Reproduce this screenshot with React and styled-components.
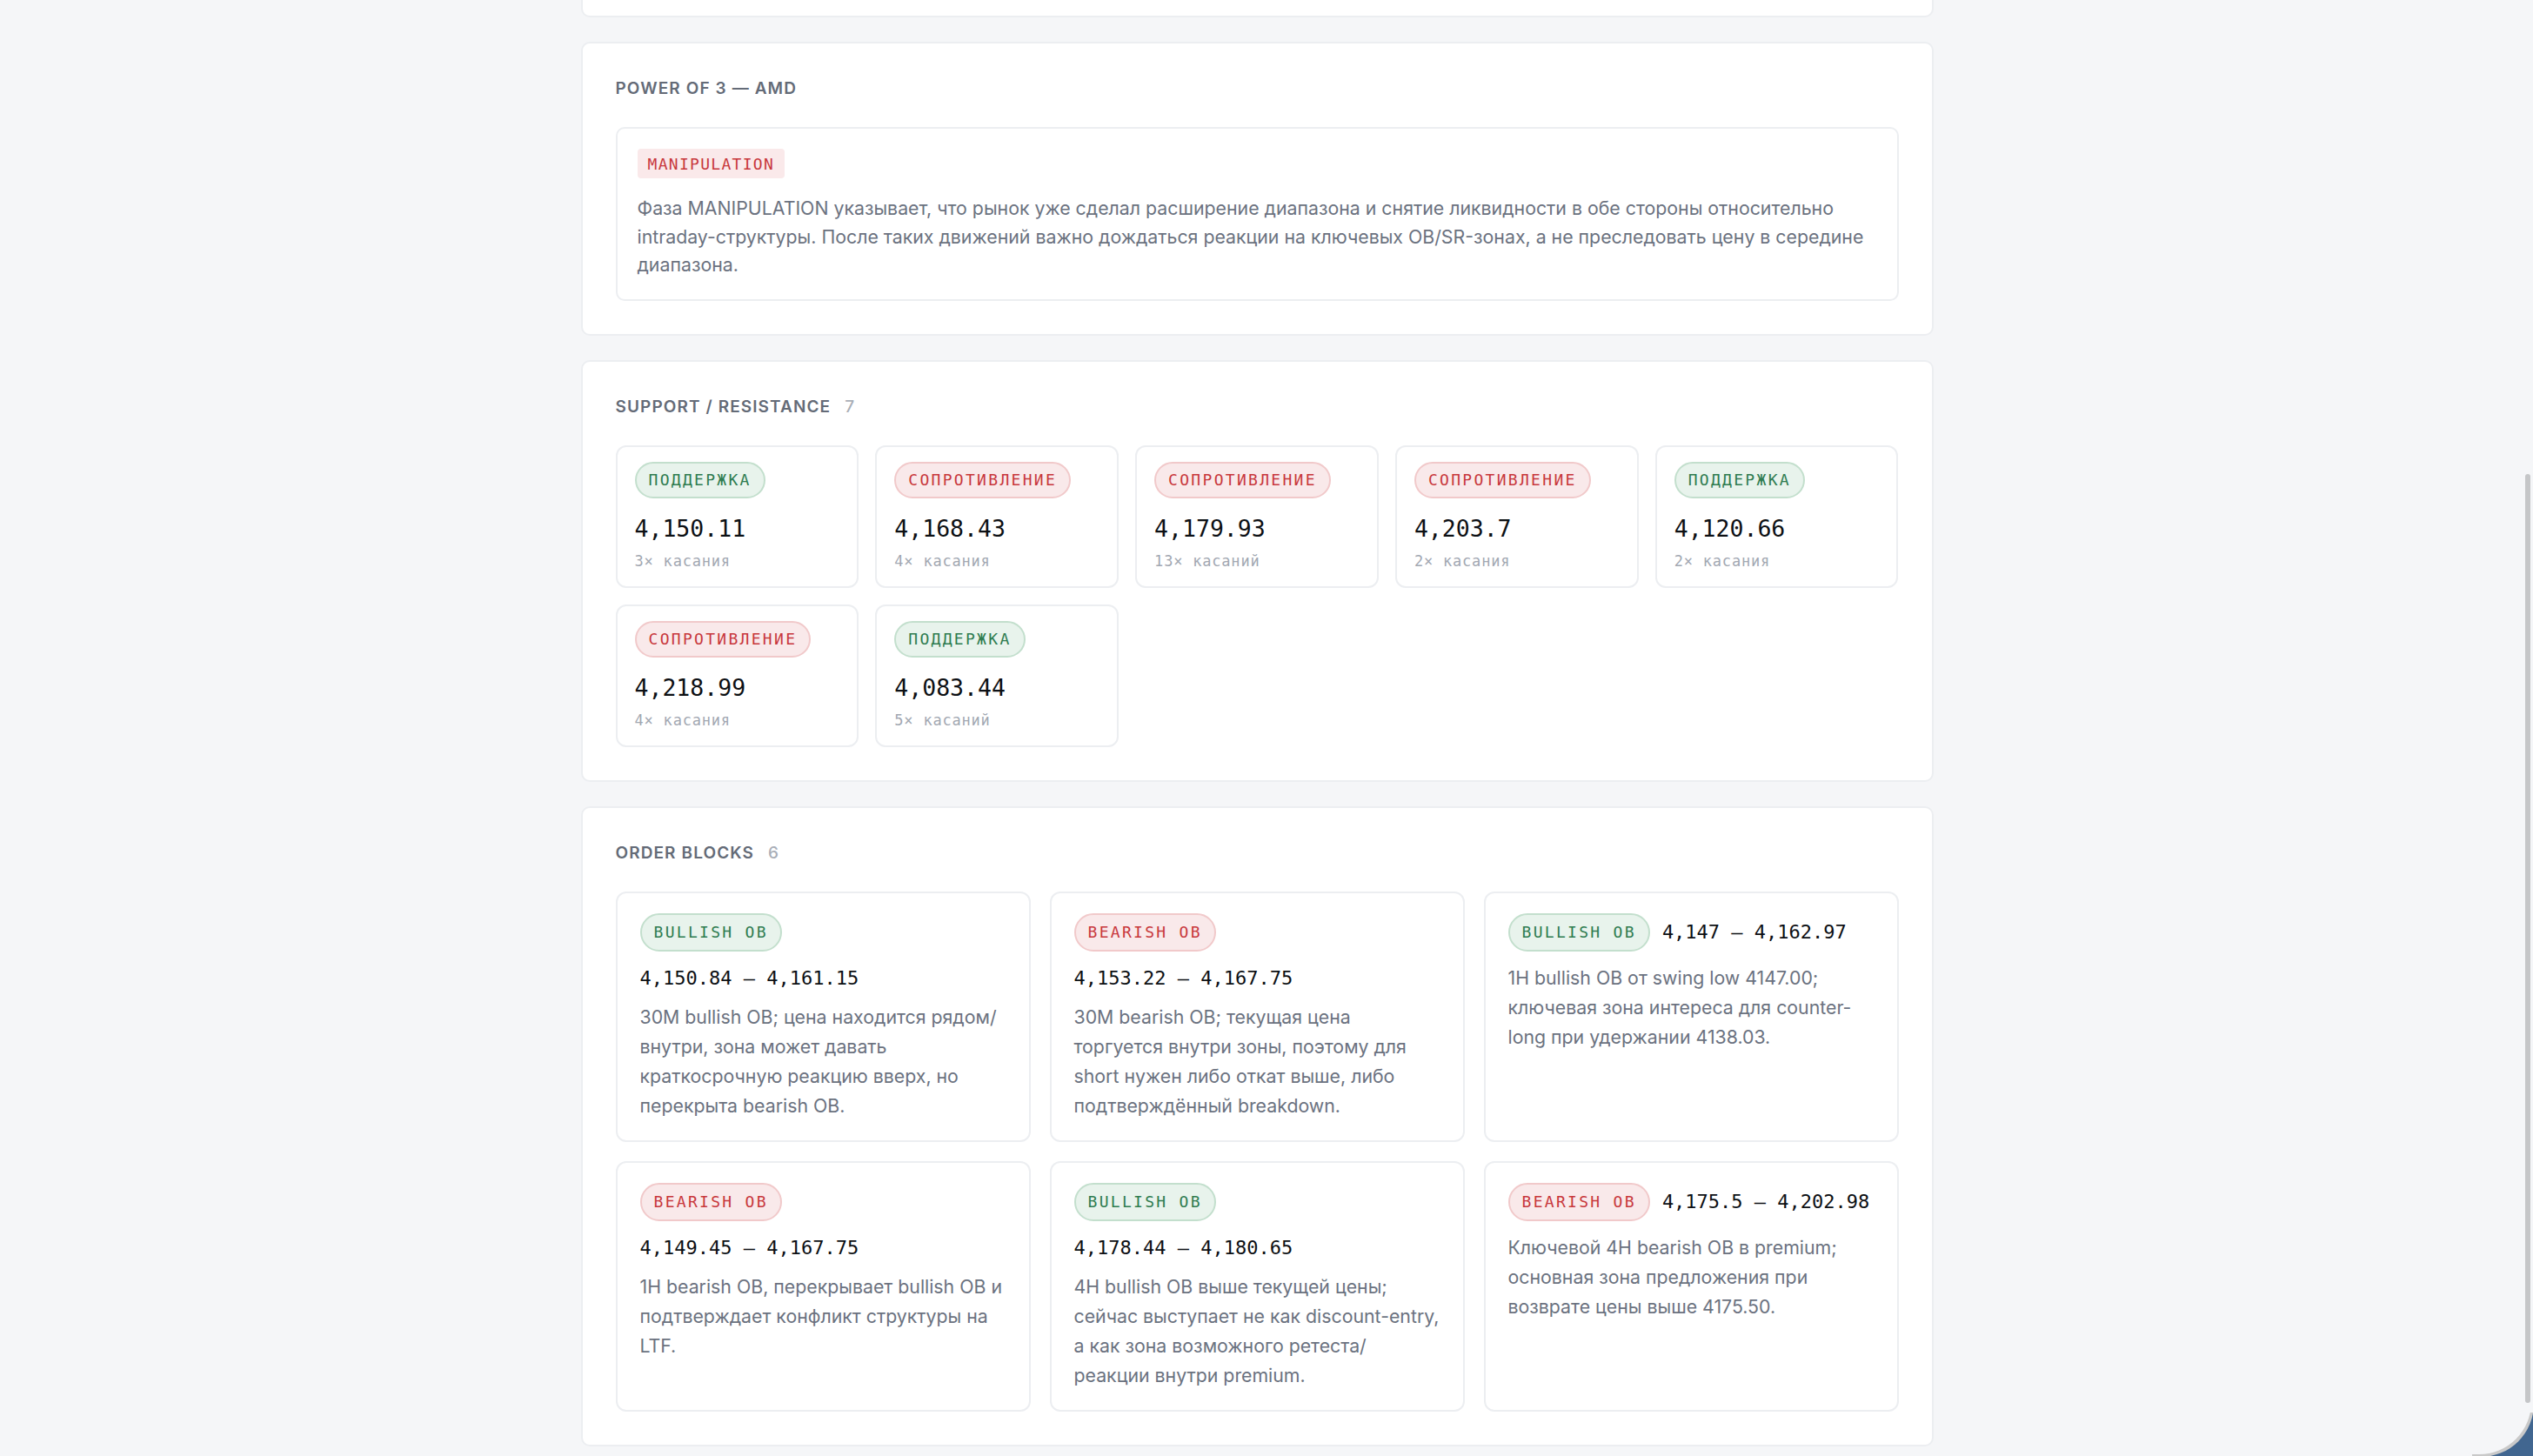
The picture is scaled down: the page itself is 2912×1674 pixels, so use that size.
import React from "react";
import styled, { createGlobalStyle } from "styled-components";

const GlobalStyle = createGlobalStyle`
  html, body {
    margin: 0;
    padding: 0;
    background: #f5f6f8;
    font-family: Inter, "Noto Sans", sans-serif;
    overflow: hidden;
  }
  * { box-sizing: border-box; }
`;

const Page = styled.div`
  height: 1674px;
  padding-right: 22px;
  overflow: hidden;
`;

const Column = styled.div`
  width: 1555px;
  margin: 0 auto;
  display: flex;
  flex-direction: column;
  gap: 28px;
`;

const Section = styled.section`
  background: #fff;
  border: 2px solid #eceef1;
  border-radius: 10px;
  padding: 38px;
`;

const TailSection = styled.div`
  height: 20px;
  background: #fff;
  border: 2px solid #eceef1;
  border-top: none;
  border-radius: 0 0 10px 10px;
`;

const Title = styled.h2`
  margin: 0 0 30px;
  display: flex;
  align-items: center;
  gap: 16px;
  font-size: 19px;
  line-height: 28px;
  font-weight: 600;
  letter-spacing: 1.1px;
  color: #646b77;
  text-transform: uppercase;
`;

const Count = styled.span`
  font-weight: 500;
  color: #a9aeb7;
`;

const PhaseBox = styled.div`
  border: 2px solid #eceef1;
  border-radius: 10px;
  padding: 23px;
`;

const Tag = styled.span`
  display: inline-flex;
  align-items: center;
  height: 34px;
  padding: 0 12px;
  border-radius: 4px;
  background: #fae9ea;
  color: #c8383c;
  font-family: "DejaVu Sans Mono", "Liberation Mono", monospace;
  font-size: 18px;
  letter-spacing: 1.3px;
`;

const Text = styled.p`
  margin: ${(p) => p.$mt || 0}px 0 0;
  font-size: 21.3px;
  line-height: ${(p) => p.$lh || 32.5}px;
  color: #6b7280;
`;

const LevelGrid = styled.div`
  display: grid;
  grid-template-columns: repeat(5, 1fr);
  gap: 19px;
`;

const LevelCard = styled.div`
  border: 2px solid #eceef1;
  border-radius: 12px;
  padding: 17px 20px;
`;

const Pill = styled.span`
  display: inline-flex;
  align-items: center;
  flex-shrink: 0;
  height: ${(p) => p.$h || 42}px;
  padding: 0 14px;
  border-radius: 999px;
  border: 2px solid ${(p) => (p.$bull ? "#c3dfcd" : "#f1c9ca")};
  background: ${(p) => (p.$bull ? "#e8f3ec" : "#f9e9ea")};
  color: ${(p) => (p.$bull ? "#2f7c50" : "#c8383c")};
  font-family: "DejaVu Sans Mono", "Liberation Mono", monospace;
  font-size: 18px;
  letter-spacing: 2.3px;
`;

const Price = styled.div`
  margin-top: 19px;
  font-family: "DejaVu Sans Mono", "Liberation Mono", monospace;
  font-size: 26.5px;
  line-height: 32px;
  color: #0d1014;
`;

const Touches = styled.div`
  margin-top: 9px;
  font-family: "DejaVu Sans Mono", "Liberation Mono", monospace;
  font-size: 17px;
  line-height: 24px;
  letter-spacing: 0.8px;
  color: #a2a8b2;
`;

const BlockGrid = styled.div`
  display: grid;
  grid-template-columns: repeat(3, 1fr);
  gap: 22px;
`;

const BlockCard = styled.div`
  border: 2px solid #eceef1;
  border-radius: 12px;
  padding: 23px 26px;
`;

const BlockHead = styled.div`
  display: flex;
  flex-wrap: wrap;
  align-items: center;
  gap: 17px 14px;
`;

const Range = styled.span`
  font-family: "DejaVu Sans Mono", "Liberation Mono", monospace;
  font-size: 22px;
  line-height: 28px;
  color: #0d1014;
`;

const ScrollThumb = styled.div`
  position: fixed;
  right: 3px;
  top: 545px;
  width: 6px;
  height: 1068px;
  border-radius: 3px;
  background: #c5c6c8;
`;

const Corner = styled.div`
  position: fixed;
  right: 0;
  bottom: 0;
  width: 70px;
  height: 50px;
  background: #416690;
  overflow: hidden;

  &::after {
    content: "";
    position: absolute;
    left: -20px;
    top: -40px;
    width: 88px;
    height: 88px;
    background: #f5f6f8;
    border-bottom-right-radius: 60px;
    box-shadow: 2px 2px 0 1px #c9c9c9;
  }
`;

const levels = [
  { bull: true, price: "4,150.11", hits: "3× касания" },
  { bull: false, price: "4,168.43", hits: "4× касания" },
  { bull: false, price: "4,179.93", hits: "13× касаний" },
  { bull: false, price: "4,203.7", hits: "2× касания" },
  { bull: true, price: "4,120.66", hits: "2× касания" },
  { bull: false, price: "4,218.99", hits: "4× касания" },
  { bull: true, price: "4,083.44", hits: "5× касаний" },
];

const blocks = [
  {
    bull: true,
    range: "4,150.84 – 4,161.15",
    text: "30M bullish OB; цена находится рядом/внутри, зона может давать краткосрочную реакцию вверх, но перекрыта bearish OB.",
  },
  {
    bull: false,
    range: "4,153.22 – 4,167.75",
    text: "30M bearish OB; текущая цена торгуется внутри зоны, поэтому для short нужен либо откат выше, либо подтверждённый breakdown.",
  },
  {
    bull: true,
    range: "4,147 – 4,162.97",
    text: "1H bullish OB от swing low 4147.00; ключевая зона интереса для counter-long при удержании 4138.03.",
  },
  {
    bull: false,
    range: "4,149.45 – 4,167.75",
    text: "1H bearish OB, перекрывает bullish OB и подтверждает конфликт структуры на LTF.",
  },
  {
    bull: true,
    range: "4,178.44 – 4,180.65",
    text: "4H bullish OB выше текущей цены; сейчас выступает не как discount-entry, а как зона возможного ретеста/реакции внутри premium.",
  },
  {
    bull: false,
    range: "4,175.5 – 4,202.98",
    text: "Ключевой 4H bearish OB в premium; основная зона предложения при возврате цены выше 4175.50.",
  },
];

const App = () => {
  return (
    <>
      <GlobalStyle />
      <Page>
        <Column>
          <TailSection />

          <Section>
            <Title>Power of 3 — AMD</Title>
            <PhaseBox>
              <Tag>MANIPULATION</Tag>
              <Text $mt={18}>
                Фаза MANIPULATION указывает, что рынок уже сделал расширение диапазона и снятие
                ликвидности в обе стороны относительно intraday-структуры. После таких движений важно
                дождаться реакции на ключевых OB/SR-зонах, а не преследовать цену в середине диапазона.
              </Text>
            </PhaseBox>
          </Section>

          <Section>
            <Title>
              Support / Resistance <Count>7</Count>
            </Title>
            <LevelGrid>
              {levels.map((l, i) => (
                <LevelCard key={i}>
                  <Pill $bull={l.bull}>{l.bull ? "ПОДДЕРЖКА" : "СОПРОТИВЛЕНИЕ"}</Pill>
                  <Price>{l.price}</Price>
                  <Touches>{l.hits}</Touches>
                </LevelCard>
              ))}
            </LevelGrid>
          </Section>

          <Section>
            <Title>
              Order Blocks <Count>6</Count>
            </Title>
            <BlockGrid>
              {blocks.map((b, i) => (
                <BlockCard key={i}>
                  <BlockHead>
                    <Pill $bull={b.bull} $h={44}>
                      {b.bull ? "BULLISH OB" : "BEARISH OB"}
                    </Pill>
                    <Range>{b.range}</Range>
                  </BlockHead>
                  <Text $mt={13} $lh={34}>
                    {b.text}
                  </Text>
                </BlockCard>
              ))}
            </BlockGrid>
          </Section>
        </Column>
      </Page>
      <ScrollThumb />
      <Corner />
    </>
  );
};

export default App;
